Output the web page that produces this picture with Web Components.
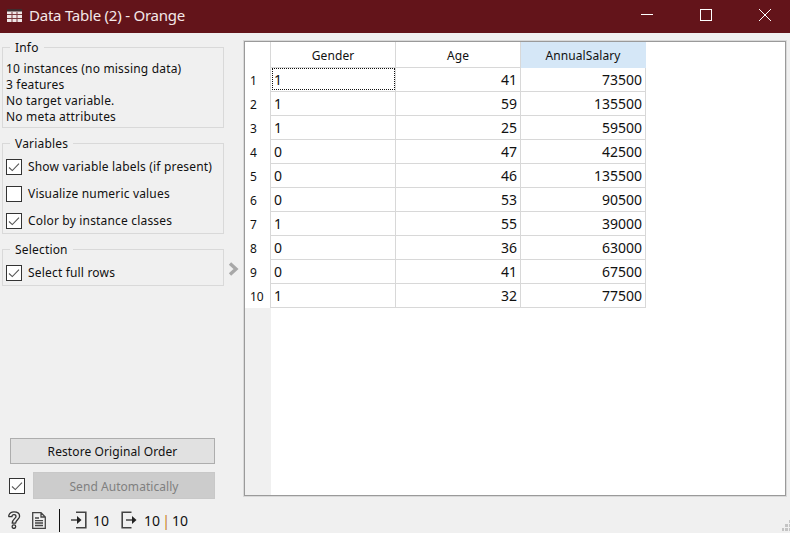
<!DOCTYPE html>
<html>
<head>
<meta charset="utf-8">
<title>Data Table (2) - Orange</title>
<style>
  html, body { margin: 0; height: 100%; overflow: hidden; background: #f0f0f0; }
  body { font: 12px "Noto Sans", "Open Sans", sans-serif; color: #111; }
</style>
</head>
<body>
<data-window></data-window>

<script>
const CHECK_MARK = `<svg width="16" height="16" viewBox="0 0 16 16"><path d="M3 8.5 L6.3 11.6 L13 4.6" fill="none" stroke="#555" stroke-width="1.1"/></svg>`;

class TitleBar extends HTMLElement {
  constructor() {
    super();
    this.attachShadow({ mode: "open" });
    this.shadowRoot.innerHTML = `
      <style>
        :host { display: flex; align-items: center; height: 33px; box-sizing: border-box; padding-bottom: 3px; background: #63141a; color: #f4e8e8; flex: none; }
        .icon { margin: 0 7px 0 7px; display: block; }
        .title { flex: 1; font: 15px "Noto Sans", sans-serif; letter-spacing: -0.23px; }
        .btn { width: 46px; height: 30px; display: flex; align-items: center; justify-content: center; }
        .btn svg { display: block; }
        .btns { display: flex; gap: 13px; margin-right: 2px; }
      </style>
      <svg class="icon" width="15" height="13" viewBox="0 0 15 13">
        <rect x="0" y="0" width="15" height="13" fill="#efe6e6"/>
        <path d="M0 5.5H15M0 9.5H15M5 3V13M10 3V13" stroke="#7a3a3f" stroke-width="1"/>
        <rect x="0" y="0" width="15" height="2.5" fill="#3c2c2e"/>
      </svg>
      <span class="title">Data Table (2) - Orange</span>
      <div class="btns">
        <div class="btn"><svg width="12" height="12" viewBox="0 0 12 12"><path d="M0 5.5H12" stroke="#fff"/></svg></div>
        <div class="btn"><svg width="12" height="12" viewBox="0 0 12 12"><rect x=".5" y=".5" width="11" height="11" fill="none" stroke="#fff"/></svg></div>
        <div class="btn"><svg width="12" height="12" viewBox="0 0 12 12"><path d="M0 0L12 12M12 0L0 12" stroke="#fff"/></svg></div>
      </div>`;
  }
}

class GroupBox extends HTMLElement {
  static get observedAttributes() { return ["label"]; }
  constructor() {
    super();
    this.attachShadow({ mode: "open" });
    this.shadowRoot.innerHTML = `
      <style>
        :host { display: block; position: relative; border: 1px solid #d9d9d9; box-sizing: border-box; margin: 0 0 15px 1px; width: 222px; letter-spacing: .18px; }
        .legend { position: absolute; left: 7px; top: -9px; padding: 0 5px; background: #f0f0f0; line-height: 17px; }
      </style>
      <span class="legend"></span>
      <slot></slot>`;
  }
  attributeChangedCallback(name, oldValue, newValue) {
    this.shadowRoot.querySelector(".legend").textContent = newValue;
  }
}

class CheckRow extends HTMLElement {
  constructor() {
    super();
    this.attachShadow({ mode: "open" });
    this.shadowRoot.innerHTML = `
      <style>
        :host { display: flex; align-items: center; gap: 6px; height: 27px; padding-left: 3px; white-space: nowrap; }
        .box { width: 14px; height: 14px; border: 1px solid #333; background: #fff; flex: none; display: block; }
        .box svg { display: block; margin: -1px; }
      </style>
      <span class="box"></span>
      <slot></slot>`;
  }
  connectedCallback() {
    if (this.hasAttribute("checked")) this.shadowRoot.querySelector(".box").innerHTML = CHECK_MARK;
  }
}

class PushButton extends HTMLElement {
  constructor() {
    super();
    this.attachShadow({ mode: "open" });
    this.shadowRoot.innerHTML = `
      <style>
        :host { display: flex; align-items: center; justify-content: center; height: 26px; box-sizing: border-box; border: 1px solid #adadad; background: #e1e1e1; color: #111; letter-spacing: .1px; }
        :host([disabled]) { height: 27px; padding-top: 1px; border-color: #c8c8c8; background: #cccccc; color: #808080; letter-spacing: .05px; }
      </style>
      <slot></slot>`;
  }
}

class ControlPanel extends HTMLElement {
  constructor() {
    super();
    this.attachShadow({ mode: "open" });
    this.shadowRoot.innerHTML = `
      <style>
        :host { display: flex; flex-direction: column; width: 225px; flex: none; padding: 14px 0 0 1px; box-sizing: border-box; }
        .info { padding: 13px 0 2px 3px; line-height: 16px; white-space: nowrap; height: 79px; box-sizing: border-box; }
        .spacer { flex: 1; }
        .actions { display: flex; flex-direction: column; padding-left: 9px; width: 205px; }
        .send { display: flex; align-items: center; margin-top: 8px; margin-left: -1px; gap: 8px; }
        .send push-button { flex: 1; }
        .tick { width: 14px; height: 14px; border: 1px solid #333; background: #fff; flex: none; }
        .tick svg { display: block; margin: -1px; }
        .vars { height: 89px; padding-top: 9px; box-sizing: border-box; }
        .sel { height: 35px; padding-top: 9px; box-sizing: border-box; }
        group-box { flex: none; }
      </style>
      <group-box label="Info">
        <div class="info">10 instances (no missing data)<br>3 features<br>No target variable.<br>No meta attributes</div>
      </group-box>
      <group-box label="Variables">
        <div class="vars">
          <check-row checked>Show variable labels (if present)</check-row>
          <check-row>Visualize numeric values</check-row>
          <check-row checked>Color by instance classes</check-row>
        </div>
      </group-box>
      <group-box label="Selection">
        <div class="sel"><check-row checked>Select full rows</check-row></div>
      </group-box>
      <div class="spacer"></div>
      <div class="actions">
        <push-button>Restore Original Order</push-button>
        <div class="send">
          <span class="tick">${CHECK_MARK}</span>
          <push-button disabled>Send Automatically</push-button>
        </div>
      </div>`;
  }
}

const ROWS = [
  [1, 41, 73500], [1, 59, 135500], [1, 25, 59500], [0, 47, 42500], [0, 46, 135500],
  [0, 53, 90500], [1, 55, 39000], [0, 36, 63000], [0, 41, 67500], [1, 32, 77500]
];

class DataTable extends HTMLElement {
  constructor() {
    super();
    this.attachShadow({ mode: "open" });
    const cells = ROWS.map((r, i) => `
      <div class="rh">${i + 1}</div>
      <div class="c left${i === 0 ? " cur" : ""}"><span>${r[0]}</span></div>
      <div class="c"><span>${r[1]}</span></div>
      <div class="c"><span>${r[2]}</span></div>`).join("");
    this.shadowRoot.innerHTML = `
      <style>
        :host { display: flex; flex: 1; min-width: 0; border: 1px solid #d9d9d9; }
        .frame { flex: 1; display: flex; border: 1px solid #9a9a9a; background: #fff; position: relative; }
        .side { position: absolute; left: 0; top: 266px; bottom: 0; width: 26px; background: #f0f0f0; }
        .grid { display: grid; grid-template-columns: 26px 125px 125px 125px; grid-auto-rows: 24px; grid-template-rows: 26px; align-content: start; }
        .corner { border-right: 1px solid #d8d8d8; }
        .h { display: flex; align-items: center; justify-content: center; border-right: 1px solid #d8d8d8; border-bottom: 1px solid #d8d8d8; font-size: 12px; letter-spacing: .1px; padding-top: 1px; box-sizing: border-box; }
        .h.on { background: #d5e7f7; border-color: #d5e7f7; }
        .rh { display: flex; align-items: center; padding-left: 5px; border-right: 1px solid #d8d8d8; box-sizing: border-box; font-size: 12px; padding-top: 1px; }
        .c { display: flex; align-items: center; justify-content: flex-end; padding: 0 3px; border-right: 1px solid #d8d8d8; border-bottom: 1px solid #d8d8d8; font-size: 14px; position: relative; }
        .c.left { justify-content: flex-start; }
        .cur::after { content: ""; position: absolute; inset: 0 0 1px 1px; border: 1px dotted #111; }
      </style>
      <div class="frame">
        <div class="grid">
          <div class="corner"></div>
          <div class="h">Gender</div>
          <div class="h">Age</div>
          <div class="h on">AnnualSalary</div>
          ${cells}
        </div>
        <div class="side"></div>
      </div>`;
  }
}

class StatusBar extends HTMLElement {
  constructor() {
    super();
    this.attachShadow({ mode: "open" });
    this.shadowRoot.innerHTML = `
      <style>
        :host { display: flex; align-items: center; height: 34px; box-sizing: border-box; padding: 8px 0 0 7px; flex: none; font-size: 14px; position: relative; }
        svg { display: block; flex: none; }
        .sep { width: 1px; height: 23px; background: #111; margin: 0 11px 0 13px; }
        .n { margin: 0 12px 0 6px; }
        .n.out { margin: 0 0 0 7px; word-spacing: -1.5px; }
        .bar { color: #c77a1e; }
        .grip { position: absolute; right: 0; bottom: 2px; }
      </style>
      <svg width="14" height="18" viewBox="0 0 14 18"><path d="M1.8 5.6V4.4C2.6 2 4.5.9 7 .9 10.2.9 12.6 2.4 12.6 5.2 12.6 8.3 8.7 8.6 8.6 12.2H5.2C5.1 8.4 9 7.4 9 5.4 9 4.2 8.1 3.6 7 3.6 5.8 3.6 5 4.4 4.9 5.6Z" fill="none" stroke="#333" stroke-width="1.3" stroke-linejoin="round"/><circle cx="6.9" cy="15.6" r="1.8" fill="none" stroke="#333" stroke-width="1.3"/></svg>
      <svg style="margin-left:11px" width="14" height="17" viewBox="0 0 14 17"><path d="M.7.7H9L13.3 5V16.3H.7ZM9 .7V5H13.3M3 6H7M3 8.6H11M3 11H11M3 13.5H11" fill="none" stroke="#444" stroke-width="1.3"/></svg>
      <span class="sep"></span>
      <svg width="16" height="18" viewBox="0 0 16 18"><path d="M5 1.2H14.8V16.8H5M0 9H6.5" fill="none" stroke="#444" stroke-width="1.6"/><path d="M6 5L10.5 9L6 13Z" fill="#222"/></svg>
      <span class="n">10</span>
      <svg width="16" height="18" viewBox="0 0 16 18"><path d="M10.5 1.2H1.2V16.8H10.5M5 9H11.5" fill="none" stroke="#444" stroke-width="1.6"/><path d="M11 5L15.5 9L11 13Z" fill="#222"/></svg>
      <span class="n out">10 <span class="bar">|</span> 10</span>
      <svg class="grip" width="8" height="11" viewBox="0 0 8 11" fill="#c4c4c4"><rect x="7" y="0" width="1" height="3"/><rect x="3" y="4" width="3" height="3"/><rect x="7" y="4" width="1" height="3"/><rect x="0" y="8" width="2" height="3"/><rect x="3" y="8" width="3" height="3"/><rect x="7" y="8" width="1" height="3"/></svg>`;
  }
}

class DataWindow extends HTMLElement {
  constructor() {
    super();
    this.attachShadow({ mode: "open" });
    this.shadowRoot.innerHTML = `
      <style>
        :host { display: flex; flex-direction: column; height: 533px; width: 790px; background: #f0f0f0; }
        .main { flex: 1; display: flex; min-height: 0; }
        .splitter { width: 18px; flex: none; display: flex; align-items: center; justify-content: center; }
        .splitter svg { display: block; position: relative; top: 3px; left: -1px; }
        .right { flex: 1; display: flex; padding: 7px 3px 2px 0; min-width: 0; }
      </style>
      <title-bar></title-bar>
      <div class="main">
        <control-panel></control-panel>
        <div class="splitter"><svg width="11" height="14" viewBox="0 0 11 14"><path d="M2 1.5L8 7L2 12.5" fill="none" stroke="#a8a8a8" stroke-width="3.4"/></svg></div>
        <div class="right"><data-table></data-table></div>
      </div>
      <status-bar></status-bar>`;
  }
}

customElements.define("title-bar", TitleBar);
customElements.define("group-box", GroupBox);
customElements.define("check-row", CheckRow);
customElements.define("push-button", PushButton);
customElements.define("control-panel", ControlPanel);
customElements.define("data-table", DataTable);
customElements.define("status-bar", StatusBar);
customElements.define("data-window", DataWindow);
</script>
</body>
</html>
